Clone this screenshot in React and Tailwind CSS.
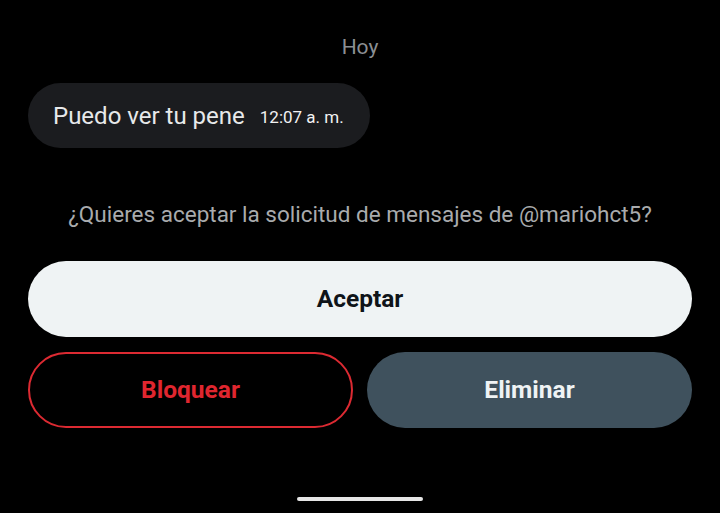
import React from 'react';

export default function App() {
  return (
    <div
      className="w-[720px] h-[513px] bg-black flex flex-col px-[28px] overflow-hidden"
      style={{ fontFamily: 'Roboto, "Noto Sans", sans-serif' }}
    >
      {/* Day label */}
      <div className="pt-[35px] text-center text-[21px] leading-[24px] text-[#8b8f93]">Hoy</div>

      {/* Incoming message */}
      <div className="mt-[24px] self-start h-[65px] flex items-center gap-[15px] pl-[25px] pr-[26px] rounded-full bg-[#1b1c1f]">
        <span className="text-[24px] text-[#e7e9ea]">Puedo ver tu pene</span>
        <span className="text-[17px] text-[#f2f2f2] mt-[4px]">12:07 a. m.</span>
      </div>

      {/* Request prompt */}
      <p className="mt-[52px] text-center text-[22.5px] leading-[28px] text-[#a9abad]">
        ¿Quieres aceptar la solicitud de mensajes de @mariohct5?
      </p>

      {/* Actions */}
      <button className="mt-[33px] h-[76px] w-full rounded-full bg-[#eff3f4] text-[24.5px] font-bold text-[#0f1419]">
        Aceptar
      </button>
      <div className="mt-[15px] flex justify-between">
        <button className="w-[325px] h-[76px] rounded-full border-2 border-[#dc2a32] text-[24.5px] font-bold text-[#e0262f]">
          Bloquear
        </button>
        <button className="w-[325px] h-[76px] rounded-full bg-[#3f515d] text-[24.5px] font-bold text-[#eff3f4]">
          Eliminar
        </button>
      </div>

      {/* Home indicator */}
      <div className="mt-[69px] mx-auto w-[126px] h-[4px] rounded-full bg-[#e6e6e6]" />
    </div>
  );
}
